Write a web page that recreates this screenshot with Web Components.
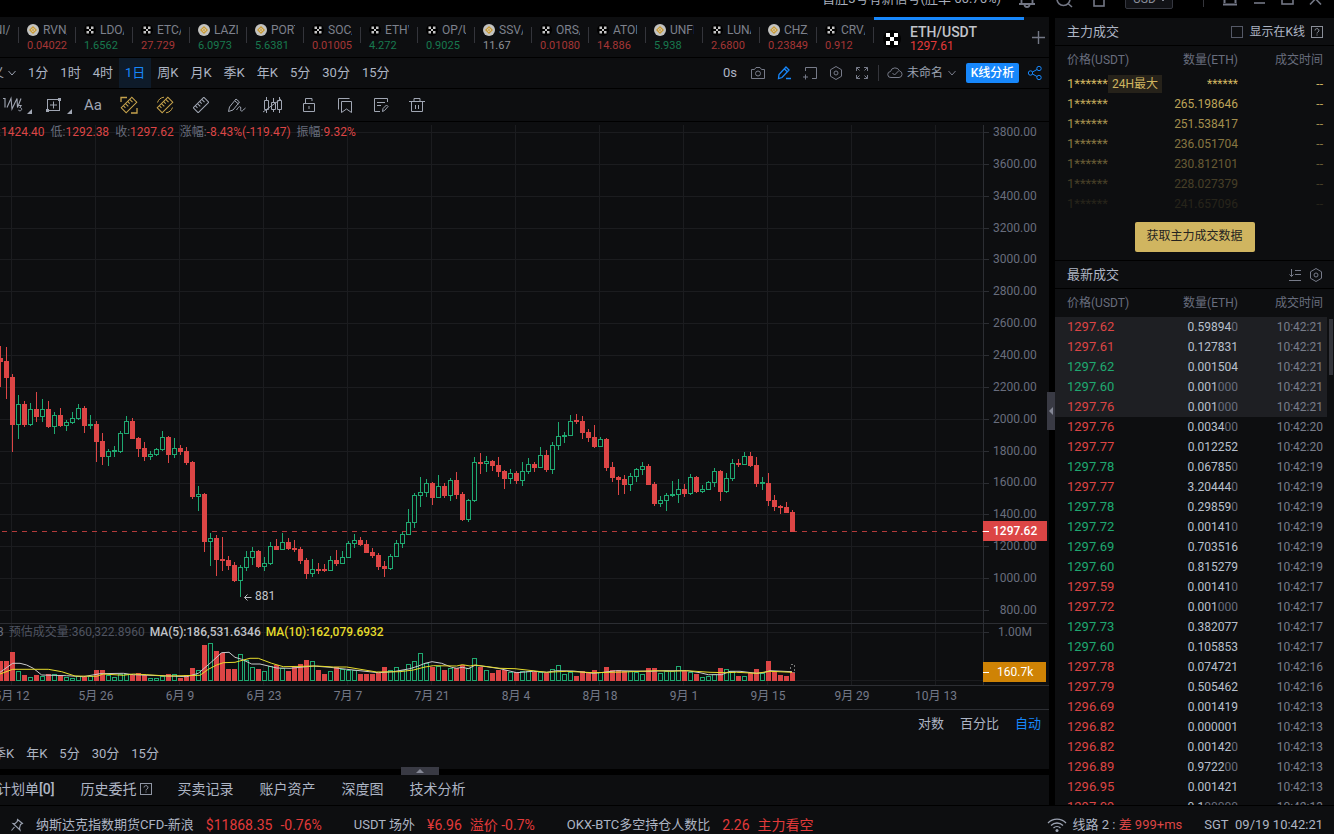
<!DOCTYPE html>
<html lang="zh-CN">
<head>
<meta charset="utf-8">
<title>ETH/USDT 1297.61</title>
<style>
:root{
  --panel:#0d0e10; --line:#2c2e33; --grid:#1b1c1f;
  --text:#adb5c4; --muted:#686d7d; --dim:#8a8e98;
  --red:#dc4545; --green:#1fa971; --blue:#1787fb; --gold:#d0b560;
}
html,body{height:100%}
body{margin:0;background:#000;color:var(--text);overflow:hidden;
  font:13px/16px Roboto,"Noto Sans CJK SC",sans-serif}
</style>
</head>
<body>
<trade-app></trade-app>
<script>
const BASE = `*{box-sizing:border-box}
button{font:inherit;color:inherit;background:none;border:0;padding:0;margin:0;white-space:nowrap}
a{color:inherit;text-decoration:none}
.red{color:var(--red)}.green{color:var(--green)}`;

function define(name, css, html){
  customElements.define(name, class extends HTMLElement{
    constructor(){
      super();
      const t = document.createElement('template');
      t.innerHTML = `<style>${BASE}${css}</style>${typeof html === 'function' ? '' : html}`;
      this.attachShadow({mode:'open'}).append(t.content.cloneNode(true));
    }
    connectedCallback(){
      if(typeof html === 'function' && !this.ready){
        this.ready = true;
        const t = document.createElement('template');
        t.innerHTML = html(this);
        this.shadowRoot.append(t.content);
      }
    }
  });
}

/* ---------- icons: [width, height, markup] ---------- */
const ruler = `<g transform="rotate(-45 8 8)"><rect x="0.5" y="4.5" width="15" height="7"/><path d="M3.5 4.5v3M6.5 4.5v4M9.5 4.5v3M12.5 4.5v4"/></g>`;
const ICONS = {
  bell:[18,18,'<path d="M1 14h16M3.500 14V7.500a5.500 5.500 0 0 1 11 0V14M6.500 14.500a2.500 2.500 0 0 0 5 0" stroke-width="1.800"/>'],
  search:[17,17,'<circle cx="7.500" cy="8" r="6.500" stroke-width="1.600"/><path d="M12 12.500l4 3.500" stroke-width="1.600"/>'],
  phone:[12,16,'<rect x="1" y="1" width="10" height="14" stroke-width="1.600"/>'],
  panel:[16,16,'<path d="M2.500 12V2h11v10M1 13.500h14" stroke-width="2"/>'],
  min:[13,13,'<path d="M1 10h11" stroke-width="1.600"/>'],
  max:[13,13,'<rect x="1" y="1" width="11" height="10" stroke-width="1.600"/>'],
  close:[13,13,'<path d="M1 0l11 11.500M12 0L1 11.500" stroke-width="1.600"/>'],
  down:[10,10,'<path d="M1.500 3l3.500 4 3.500-4"/>'],
  plus:[13,13,'<path d="M6.500 0v13M0 6.500h13" stroke-width="1.400"/>'],
  bnb:[12,12,'<circle cx="6" cy="6" r="6" fill="#c3c3c0" stroke="none"/><path d="M6 2l4 4-4 4-4-4z" fill="#c99a35" stroke="none"/><path d="M6 4.300L7.700 6 6 7.700 4.300 6z" fill="none" stroke="#d8d4c4" stroke-width="1"/>'],
  okx:[12,12,'<circle cx="6" cy="6" r="6" fill="#000" stroke="none"/><path d="M2.500 2.500H5V5H2.500zM7 2.500h2.500V5H7zM5 5h2v2H5zM2.500 7H5v2.500H2.500zM7 7h2.500v2.500H7z" fill="#c4c4c4" stroke="none"/>'],
  okxbig:[18,18,'<circle cx="9" cy="9" r="9" fill="#000" stroke="none"/><path d="M3 3h4v4H3zM11 3h4v4h-4zM7 7h4v4H7zM3 11h4v4H3zM11 11h4v4h-4z" fill="#fff" stroke="none"/>'],
  camera:[16,16,'<path d="M1.500 4.500h3l1.500-2h4l1.500 2h3v9h-13z"/><circle cx="8" cy="8.500" r="2.500"/>'],
  pen:[16,16,'<path d="M2.500 13.500l.5-4 7-7.500 3 3-7 7.500zM8.500 4l3 3M10 13.500h5" stroke-width="1.300"/>'],
  addbox:[16,16,'<path d="M3.500 6V2.500h11v11H10M3.500 9.500v5M1 12h5"/>'],
  hex:[14,16,'<path d="M7 1.500l5.500 3.250v6.500L7 14.500l-5.500-3.250v-6.500z"/><circle cx="7" cy="8" r="2"/>'],
  full:[16,16,'<path d="M2.500 6V2.500H6M2.500 2.500l3 3M10 2.500h3.500V6M13.500 2.500l-3 3M2.500 10v3.500H6M2.500 13.500l3-3M10 13.500h3.500V10M13.500 13.500l-3-3"/>'],
  cloud:[16,14,'<path d="M4 11.500a3 3 0 0 1-.5-6 4.700 4.700 0 0 1 9-.5 3.300 3.300 0 0 1-.5 6.500zM5.500 7l2 2 4-4"/>'],
  share:[16,16,'<circle cx="3.500" cy="8" r="2.200"/><circle cx="12" cy="3.500" r="2.200"/><circle cx="12" cy="12.500" r="2.200"/><path d="M5.500 7L10 4.500M5.500 9l4.500 2.500"/>'],
  waves:[39,34,'<path d="M3 10.500h2v9M7 19.500l4-9 1 10.500 5-10.500 .5 9 3.500-9" stroke-width="1.100"/><path d="M18.500 17.500h3l-1.700 2c2.500 0 2.500 3.300 0 3.300q-1 0-1.500-.8"/><path d="M32 21v5h-5z" fill="currentColor" stroke="none"/>'],
  frame:[36,34,'<rect x="8.500" y="11.500" width="12" height="11"/><path d="M14.500 13.500v7M11 17h7"/><path d="M7 21h3v3H7zM19 10h3v3h-3z" fill="currentColor" stroke="none"/><path d="M33 21v5h-5z" fill="currentColor" stroke="none"/>'],
  ruler:[16,16,ruler],
  rulerbox:[18,18,'<g transform="translate(1 1)">'+ruler+'</g><path d="M1 6V1.500h6M11 17h6v-5" stroke-width="1.300"/>'],
  rulercirc:[18,18,'<g transform="translate(1 1)">'+ruler+'</g><path d="M1.500 6.500A8 8 0 0 1 8 1.200M16.500 11.500A8 8 0 0 1 10 16.800"/>'],
  brush:[20,16,'<path d="M1.500 14.500l1-4.500 6.500-8 3.500 3-6.500 8zM8 4l3.500 3M9.500 13c2-3 3-4 4-3s-1 4 1 4 2-2 4-3"/>'],
  candles:[20,16,'<path d="M3.500 0v3M3.500 13v3M10.500 1v4M10.500 12v3M16.500 0v3M16.500 13v3"/><path d="M1.500 3.500h4v9h-4zM8.500 5.500h4v7h-4zM14.500 3.500h4v9h-4zM0 15L18 2"/>'],
  lock:[14,16,'<path d="M1.500 6.500h11v8h-11zM3.500 6V1.500H10V4M7 9v3"/>'],
  save:[16,16,'<path d="M1.500 12.500v-11h11M4.500 4.500h10v11l-5-3.500-5 3.500z"/>'],
  note:[16,16,'<path d="M14.500 5V1.500h-13v13H7M4 5.500h8M4 8.500h4M9.500 14.500l.5-3 3.500-3.500 1.500 1.500-3.500 4z"/>'],
  trash:[16,16,'<path d="M0 4.500h16M5 4V1.500h6V4M2.500 4.500v10h11v-10M6.500 8v4M9.500 8v4"/>'],
  help:[12,12,'<rect x="0.500" y="0.500" width="11" height="11"/><path d="M4 4.500a2 1.800 0 1 1 3 1.500q-1 .5-1 1.500M6 8.500v1"/>'],
  sort:[14,14,'<path d="M3.500 1v7.500M1.500 6.500l2 2 2-2M7 2.500h6M7 6.500h6M1 12.500h12"/>'],
  pin:[14,14,'<path d="M7.500 1.500l5 4-2 1-1 3.500.5 2-7-6.500 2 .2L7.300 3.500zM4.500 9L1.500 12.500" stroke-width="1.100"/>'],
  wifi:[20,16,'<path d="M1 6a12.500 12.500 0 0 1 18 0M4 8.500a8.500 8.500 0 0 1 12 0M6.500 11a5 5 0 0 1 7 0" stroke-width="1.300"/><circle cx="10" cy="13.500" r="1.500" fill="currentColor" stroke="none"/>']
};
define('ui-icon', ':host{display:inline-flex;flex:none}svg{display:block}', el => {
  const [w,h,m] = ICONS[el.getAttribute('name')];
  return `<svg width="${w}" height="${h}" viewBox="0 0 ${w} ${h}" fill="none" stroke="currentColor" aria-hidden="true">${m}</svg>`;
});

/* ---------- window title bar ---------- */
define('title-bar', `
:host{display:flex;align-items:flex-end;height:17px;overflow:hidden}
.bar{flex:1;display:flex;align-items:center;justify-content:flex-end;height:36px;padding-right:12px;color:#737785}
.msg{color:#a9b0be;margin-right:17px}
.tools,.win{display:flex;align-items:center}
.tools{gap:20px}
select{appearance:none;font:12px/16px Roboto,sans-serif;color:#8a8e9a;background:#111216;border:1px solid #34363f;border-radius:2px;
 width:48px;height:20px;padding:0 7px;margin:0}
.usd{position:relative;margin:0 30px 0 20px;display:flex;color:#8a8e9a}
.usd ui-icon{position:absolute;right:5px;top:5px}
.win{gap:15px}
.sep{width:1px;height:16px;background:#34353b;margin-right:18px}
`, `<div class="bar"><a class="msg" href="#">首胜3号有新信号(胜率 66.76%)</a>
<div class="tools"><ui-icon name="bell"></ui-icon><ui-icon name="search"></ui-icon><ui-icon name="phone"></ui-icon></div>
<label class="usd"><select aria-label="计价货币"><option>USD</option></select><ui-icon name="down"></ui-icon></label><span class="sep"></span>
<div class="win"><ui-icon name="panel"></ui-icon><ui-icon name="min"></ui-icon><ui-icon name="max"></ui-icon><ui-icon name="close"></ui-icon></div></div>`);

/* ---------- pair tabs ---------- */
define('pair-tab', `
:host{display:block;flex:none;width:57px;border-left:1px solid transparent;padding:5px 0 0 8px;position:relative;font-size:12px}
:host::before{content:"";position:absolute;left:-1px;top:10px;height:16px;border-left:1px solid #34353b}
.n{display:flex;align-items:center;gap:4px;color:#7d818c;height:16px}
.n span{width:24px;overflow:hidden;white-space:nowrap}
.p{font-size:11px;line-height:16px}
.red{color:#a63636}.green{color:#18794f}.flat{color:#8f9298}
`, el => `<div class="n"><ui-icon name="${el.getAttribute('icon')}"></ui-icon><span>${el.getAttribute('pair')}</span></div><div class="p ${el.getAttribute('tone')}"><slot></slot></div>`);

const TABS = [['okx','UNI/','','red'],['bnb','RVN/','0.04022','red'],['okx','LDO/','1.6562','green'],['okx','ETC/','27.729','red'],
['bnb','LAZI','6.0973','green'],['bnb','PORT','5.6381','green'],['okx','SOC/','0.01005','red'],['okx','ETHW','4.272','green'],
['okx','OP/U','0.9025','green'],['bnb','SSV/','11.67','flat'],['okx','ORS/','0.01080','red'],['okx','ATOM','14.886','red'],
['bnb','UNFI','5.938','green'],['okx','LUNA','2.6800','red'],['bnb','CHZ/','0.23849','red'],['okx','CRV/','0.912','red']];
define('pair-tabs', `
:host{display:flex;height:40px;background:var(--panel);overflow:hidden}
.list{display:flex;margin-left:-39px}
.active{display:flex;align-items:center;gap:9px;width:151px;padding:3px 0 0 10px;position:relative}
.active::before{content:"";position:absolute;left:1px;right:0;top:0;height:3px;background:var(--blue)}
.active::after{content:"";position:absolute;left:0;top:10px;height:16px;border-left:1px solid #34353b}
.active div{line-height:14px}
b{display:block;font-size:14px;font-weight:500;color:#c0c3ca}
.v{font-size:12px;color:#e23a3a}
.add{margin:0 4px 0 auto;color:#737785;display:flex;align-items:center}
`, `<div class="list">${TABS.map(t=>`<pair-tab icon="${t[0]}" pair="${t[1]}" tone="${t[3]}">${t[2]}</pair-tab>`).join('')}</div>
<div class="active"><ui-icon name="okxbig"></ui-icon><div><b>ETH/USDT</b><span class="v">1297.61</span></div></div>
<button class="add" aria-label="添加"><ui-icon name="plus"></ui-icon></button>`);

/* ---------- period row ---------- */
const btns = a => a.map(x=>`<button${x==='1日'?' class="on"':''}>${x}</button>`).join('');
define('period-bar', `
:host{display:flex;align-items:stretch;height:30px;background:var(--panel);overflow:hidden}
nav{display:flex;margin-left:-35px}
nav button{padding:0 6px;display:flex;align-items:center}
nav .more{padding:0 5px 0 0;gap:3px;color:#9aa1b0}
nav .on{color:var(--blue);background:#0e1b2a}
.side{display:flex;align-items:center;margin-left:auto;padding-right:6px;color:#777b89}
.delay{color:var(--text);margin-right:13px}
.ic{display:flex;gap:10px;align-items:center;padding-right:8px;border-right:1px solid #34353b}
.ic>*{width:16px;justify-content:center}
.ic .pen{color:var(--blue)}
.name{display:flex;align-items:center;font-size:12px;gap:4px;margin:0 9px 0 8px}
.name span{color:#9ba2b1}
.go{background:var(--blue);color:#fff;height:20px;width:53px;border-radius:2px;font-size:12px;font-weight:500;margin-right:8px}
.share{color:var(--blue)}
`, `<nav><button class="more">自定义<ui-icon name="down"></ui-icon></button>${btns(['1分','1时','4时','1日','周K','月K','季K','年K','5分','30分','15分'])}</nav>
<div class="side"><span class="delay">0s</span><div class="ic"><ui-icon name="camera"></ui-icon><ui-icon class="pen" name="pen"></ui-icon><ui-icon name="addbox"></ui-icon><ui-icon name="hex"></ui-icon><ui-icon name="full"></ui-icon></div>
<button class="name"><ui-icon name="cloud"></ui-icon><span>未命名</span><ui-icon name="down"></ui-icon></button><button class="go">K线分析</button><ui-icon class="share" name="share"></ui-icon></div>`);

/* ---------- drawing tools ---------- */
define('draw-bar', `
:host{display:flex;height:32px;background:var(--panel);color:#a0a6b3;overflow:hidden}
button{flex:none;width:36px;display:flex;align-items:center;justify-content:center}
.wide{width:39px}
.aa{font-size:15px}
.y{color:#c6a34c}
`, `<button class="wide" aria-label="波浪"><ui-icon name="waves"></ui-icon></button><button aria-label="形状"><ui-icon name="frame"></ui-icon></button><button class="aa">Aa</button>
<button class="y" aria-label="区间统计"><ui-icon name="rulerbox"></ui-icon></button><button class="y" aria-label="测距"><ui-icon name="rulercirc"></ui-icon></button>`
+ ['ruler','brush','candles','lock','save','note','trash'].map(n=>`<button aria-label="${n}"><ui-icon name="${n}"></ui-icon></button>`).join(''));

/* ---------- chart data: colour, high, open/close top, bottom, low (thirds of a pixel) ---------- */
const EARLY = `R48,84,96,170 R50,93,144,208 R132,141,285,366 G195,222,285,328 R212,222,285,290 G219,237,285,288 R186,237,261,276 G207,237,261,276 R213,237,291,294 G246,255,291,312 R234,255,288,290 G270,276,288,303 G246,264,279,282 G223,234,267,270 R228,234,288,308 G255,282,288,298 R274,282,336,395 R309,333,381,404 G357,363,381,408 G348,360,366,381 G303,309,366,369 G258,273,312,312 R265,273,327,327 R321,324,357,381 R336,354,381,392 G363,372,381,390 G354,357,375,378 G303,321,360,363 R318,321,375,398 G324,354,375,384 R345,354,366,375 R352,363,399,405 R393,396,501,506 G468,492,501,543 R489,492,636,666 G608,624,636,708 R615,624,690,738 R621,687,693,723 R679,690,708,720 R696,705,753,756 G705,711,753,801 G663,681,714,724 G651,663,684,705 R659,663,711,714 G681,699,711,723 G636,648,702,705 R627,648,660,660 G609,636,660,660 R624,636,657,660 R630,654,660,666 R651,657,693,701 R684,690,732,746 G687,717,732,742 R699,717,723,731 R702,717,723,725`;
const LATE = `G498,510,543,543 R480,510,522,528 G483,501,522,522 G453,459,504,504 G432,450,462,474 R441,450,465,468 R450,462,489,490 R474,486,498,504 R489,495,531,540 R513,528,537,561 G492,498,537,540 G450,459,501,501 G425,432,462,474 G357,396,435,435 G309,315,399,414 G261,306,318,351 G267,279,309,321 R276,279,324,345 G255,288,324,324 R279,288,318,324 G264,270,318,332 R246,270,315,327 R306,312,390,392 G327,330,390,396 G201,216,333,336 R189,216,222,251 G198,213,222,246 R210,213,228,243 R201,225,246,261 R240,243,267,297 G237,249,267,282 R243,249,273,281 G216,243,273,288 G204,222,246,251 R216,222,234,246 G171,195,234,234 R180,195,240,246 G156,165,240,251 G96,138,168,180 G126,135,141,159 G75,93,138,138 R72,90,96,102 R78,93,129,147 R117,126,144,156 R105,141,171,174 G141,147,171,171 R144,147,234,243 R216,231,264,276 R258,261,270,315 R255,267,285,312 G250,258,285,303 G234,237,261,276 G216,228,240,254 R222,228,285,285 R276,282,342,348 G318,330,342,351 G309,315,333,363 G273,312,318,321 G267,297,315,339 R282,297,312,320 G252,261,312,315 R258,261,306,309 G285,297,306,309 G273,276,300,300 G234,243,279,290 R240,243,306,333 G249,264,306,309 G207,219,267,273 R207,219,225,231 G186,198,225,225 R186,198,228,231 R201,225,282,290 G261,276,282,300 R249,279,333,348 R315,330,351,363 R345,348,354,372 R336,351,369,369 R360,366,426,426`;
const VOLUME = [153,153,126,183,195,201,195,198,192,192,195,201,204,198,200,199,180,180,195,201,192,192,194,189,195,204,204,198,192,192,204,195,174,180,105,99,123,129,177,177,132,150,171,177,183,168,165,174,183,171,162,150,153,180,192,183,171,177,180,180,192,192,192,189,171,180,171,180,162,153,129,159,171,168,180,174,174,165,174,144,171,180,189,180,180,185,186,183,183,186,186,189,177,165,192,186,198,183,186,180,186,171,180,180,183,183,186,192,174,174,189,183,183,168,183,186,192,201,198,192,174,177,183,198,198,189,177,189,153,183,195,198,186];
const MA5 = '0,187 38,160 60,160 80,165 100,175 125,195 200,197 250,200 300,191 370,190 400,194 560,200 595,190 630,160 665,128 687,127 705,142 725,148 755,162 780,162 830,174 870,175 940,168 990,172 1040,178 1135,188 1180,185 1230,176 1255,168 1275,160 1296,155 1325,160 1355,172 1370,175 1387,172 1405,176 1425,166 1460,170 1500,176 1550,188 1600,184 1640,187 1670,182 1720,183 1780,190 1800,188 1850,182 1950,184 1995,182 2060,182 2100,188 2125,194 2165,194 2190,184 2220,184 2270,190 2290,188 2310,182 2376,185';
const MA10 = '0,192 38,178 145,178 185,185 225,198 290,199 310,192 370,196 400,192 440,194 500,198 600,196 625,178 650,165 670,158 705,157 730,150 750,145 775,145 815,160 850,170 950,168 1000,171 1040,171 1130,186 1200,185 1240,180 1275,171 1300,167 1370,168 1387,164 1410,168 1425,165 1500,175 1545,176 1640,187 1700,184 1780,188 1870,186 1970,182 2010,184 2060,182 2130,187 2180,188 2210,187 2270,190 2310,184 2376,187';
const PRICES = Array.from({length:16},(_,i)=>3800-200*i);
const priceY = v => Math.round(10 + (3800-v)*478/3000);

function plotMarkup(){
  let s = '';
  for(const p of PRICES) s += `<rect class="g" x="0" y="${priceY(p)}" width="100%" height="1"/>`;
  for(const y of [510,558]) s += `<rect class="g" x="0" y="${y}" width="100%" height="1"/>`;
  for(let x=11;x<1000;x+=84) s += `<rect class="g" x="${x}" y="3" width="1" height="560"/>`;
  s += `<rect class="l" x="0" y="501" width="100%" height="1"/>`;
  s += `<line x1="2" x2="100%" y1="409.5" y2="409.5" stroke="#dc4545" stroke-dasharray="5 5" opacity=".8"/>`;
  const rows = [...EARLY.split(' ').map(r=>[r,208]), ...LATE.split(' ').map(r=>[r,268])];
  rows.forEach(([r,base],k)=>{
    const [h,t,b,l] = r.slice(1).split(',').map(n=>base+Math.round(n/3));
    const x = k*6, up = r[0]==='G', c = up?'u':'d';
    if(t>h) s += `<rect class="${c}" x="${x}" y="${h}" width="1" height="${t-h}"/>`;
    if(l>b) s += `<rect class="${c}" x="${x}" y="${b}" width="1" height="${l-b}"/>`;
    const v = 488+Math.round(VOLUME[k]/3);
    if(up){
      s += `<rect class="o" x="${x-1.5}" y="${t+.5}" width="4" height="${Math.max(b-t-1,1)}"/>`;
      s += `<rect class="o" x="${x-1.5}" y="${v+.5}" width="4" height="${558-v}"/>`;
    }else{
      s += `<rect class="d" x="${x-2}" y="${t}" width="5" height="${Math.max(b-t,1)}"/>`;
      s += `<rect class="d" x="${x-2}" y="${v}" width="5" height="${559-v}"/>`;
    }
  });
  s += `<rect x="790.5" y="542.5" width="4" height="8" fill="none" stroke="#777" stroke-dasharray="2 2"/>`;
  const line = (pts,c) => `<polyline points="${pts.split(' ').map(p=>{const [a,b]=p.split(',');return (a/3).toFixed(1)+','+(488+b/3).toFixed(1)}).join(' ')}" fill="none" stroke="${c}" stroke-width="1" shape-rendering="auto"/>`;
  s += line(MA5,'#c9cacc') + line(MA10,'#e6dc2c');
  s += `<path d="M244.500 475.500h7M247.500 472.500l-3 3 3 3" fill="none" stroke="#b9bbc0" shape-rendering="auto"/><text x="255" y="478">881</text>`;
  return `<svg width="100%" height="563" shape-rendering="crispEdges" role="img" aria-label="ETH/USDT 日K线">${s}</svg>`;
}
define('price-chart', `
:host{display:grid;grid-template-columns:minmax(0,1fr) 66px;background:var(--panel);font-size:12px}
.plot{display:grid;grid-template-rows:501px auto;overflow:hidden}
.plot svg{grid-area:1/1/3/2;display:block}
.g{fill:var(--grid)}.l{fill:var(--line)}.u{fill:var(--green)}.d{fill:var(--red)}.o{fill:var(--panel);stroke:var(--green)}
text{fill:#c4c6ca;font-size:12px}
.legend{grid-column:1;display:flex;align-self:start;white-space:nowrap;z-index:1;color:var(--muted);line-height:16px}
.ohlc{grid-row:1;gap:6px;margin-left:-14px;padding-top:2px}
.ohlc i{font-style:normal}
.vol{grid-row:2;gap:5px;margin-left:-3px;padding-top:1px}
.est{color:#4f5461}.vol b{font-weight:500}.m5{color:#c0c3c8}.m10{color:#e6dc2c}
.axis{position:relative;color:var(--muted)}
.axis svg{position:absolute;left:0;top:0}
.labels{position:absolute;left:10px;top:2px;height:494px;display:flex;flex-direction:column;justify-content:space-between;text-align:right}
.million{position:absolute;left:15px;top:502px}
.tag{position:absolute;left:0;width:64px;height:20px;line-height:20px;color:#fff;font-weight:500;padding-left:10px}
.tag::before{content:"";position:absolute;left:0;top:10px;width:6px;height:1px;background:#fff}
.last{top:399px;background:#dc4545}
.amount{top:540px;width:63px;background:#cf8305;padding-left:14px;font-weight:400}
.dates{grid-column:1/3;display:flex;height:25px;border-top:1px solid var(--line);border-bottom:1px solid var(--line);overflow:hidden;color:#747988}
.dates span{flex:none;width:84px;text-align:center;line-height:20px}
.dates span:first-child{margin-left:-30px}
`, () => `<div class="plot">${plotMarkup()}
<div class="legend ohlc"><span>高:<i class="red">1424.40</i></span><span>低:<i class="red">1292.38</i></span><span>收:<i class="red">1297.62</i></span><span>涨幅:<i class="red">-8.43%(-119.47)</i></span><span>振幅:<i class="red">9.32%</i></span></div>
<div class="legend vol"><span>3</span><span class="est">预估成交量:360,322.8960</span><b class="m5">MA(5):186,531.6346</b><b class="m10">MA(10):162,079.6932</b></div></div>
<div class="axis"><svg width="66" height="563" shape-rendering="crispEdges"><rect class="l" x="0" y="3" width="1" height="560"/><rect class="l" x="0" y="501" width="64" height="1"/>${[...PRICES.map(priceY),510].map(y=>`<rect class="l" x="0" y="${y}" width="6" height="1"/>`).join('')}</svg>
<div class="labels">${PRICES.map(p=>`<span>${p}.00</span>`).join('')}</div><span class="million">1.00M</span><span class="tag last">1297.62</span><span class="tag amount">160.7k</span></div>
<div class="dates">${['5月 12','5月 26','6月 9','6月 23','7月 7','7月 21','8月 4','8月 18','9月 1','9月 15','9月 29','10月 13'].map(d=>`<span>${d}</span>`).join('')}</div>`);

/* ---------- below the chart ---------- */
define('scale-bar', `
:host{display:block;background:var(--panel);flex:1}
.scale{display:flex;justify-content:flex-end;gap:16px;height:28px;align-items:center;padding-right:8px}
.on{color:var(--blue)}
nav{display:flex;height:31px;margin-left:-13px}
nav button{padding:0 6px}
`, `<div class="scale"><button>对数</button><button>百分比</button><button class="on">自动</button></div><nav>${btns(['季K','年K','5分','30分','15分'])}</nav>`);

define('order-tabs', `
:host{display:block;position:relative;padding-top:6px}
nav{display:flex;height:30px;padding-bottom:2px;background:var(--panel);font-size:14px;overflow:hidden}
nav button{padding:0 13px;display:flex;align-items:center;gap:3px}
nav button:first-child{margin-left:-16px;gap:0}
b{font-weight:500}
ui-icon{color:#8f95a3}
.fold{position:absolute;left:401px;top:-2px;width:38px;height:8px;background:#393a44;display:flex;justify-content:center;align-items:center}
.fold::before{content:"";border:4px solid transparent;border-top:0;border-bottom-color:#858896}
`, `<button class="fold" aria-label="展开"></button><nav><button>计划单<b>[0]</b></button><button>历史委托<ui-icon name="help"></ui-icon></button><button>买卖记录</button><button>账户资产</button><button>深度图</button><button>技术分析</button></nav>`);

/* ---------- trade tables ---------- */
const TABLE = `
table{border-collapse:collapse;table-layout:fixed;width:calc(100% - 7px);font-size:12px;white-space:nowrap}
th,td{padding:0;height:20px;text-align:right;font-weight:400}
th{color:var(--muted)}
th:first-child,td:first-child{text-align:left;padding-left:12px}
th:last-child,td:last-child{padding-right:4px;width:89px}
th:nth-child(2){width:73px}
header{display:flex;align-items:center;padding:0 11px 0 12px;border-bottom:1px solid #000}
h2{font-size:13px;font-weight:400;margin:0 auto 0 0}
td:first-child{font-size:13px}`;
const HEAD = '<thead><tr><th>价格(USDT)</th><th>数量(ETH)</th><th>成交时间</th></tr></thead>';
define('main-trades', TABLE + `
:host{display:block;background:var(--panel);height:243px;margin-top:1px;border-bottom:1px solid #000}
header{height:28px;gap:6px;font-size:12px}
label{display:flex;align-items:center;gap:6px}
input{appearance:none;width:12px;height:12px;margin:0;border:1px solid #555967}
header ui-icon{color:var(--dim)}
th{height:28px}
td{color:var(--gold)}
em{font-style:normal;font-size:12px;line-height:18px;display:inline-block;background:#26221a;padding:0 4px}
td:first-child{line-height:18px}
.get{display:block;margin:8px auto 0;width:120px;height:30px;border-radius:2px;background:var(--gold);color:#24231f;font-size:12px;padding-bottom:2px}
`, `<header><h2>主力成交</h2><label><input type="checkbox">显示在K线</label><ui-icon name="help"></ui-icon></header>
<table>${HEAD}<tbody>${[['******',100],['265.198646',90],['251.538417',77],['236.051704',62],['230.812101',46],['228.027379',29],['241.657096',13]].map(([q,o],i)=>`<tr style="opacity:${o/100}"><td>1******${i?'':'<em>24H最大</em>'}</td><td>${q}</td><td>--</td></tr>`).join('')}</tbody></table>
<button class="get">获取主力成交数据</button>`);

const LAST = `R1297.62 0.59894|0 21,R1297.61 0.127831| 21,G1297.62 0.001504| 21,G1297.60 0.001|000 21,R1297.76 0.001|000 21,R1297.76 0.0034|00 20,R1297.77 0.012252| 20,G1297.78 0.06785|0 19,R1297.77 3.20444|0 19,G1297.78 0.29859|0 19,G1297.72 0.00141|0 19,G1297.69 0.703516| 19,G1297.60 0.815279| 19,R1297.59 0.00141|0 17,R1297.72 0.001|000 17,G1297.73 0.382077| 17,G1297.60 0.105853| 17,R1297.78 0.074721| 16,R1297.79 0.505462| 16,R1296.69 0.001419| 13,R1296.82 0.000001| 13,R1296.82 0.00142|0 13,R1296.89 0.9722|00 13,R1296.95 0.001421| 13,R1297.09 0.1|00000 13`.split(',');
define('last-trades', TABLE + `
:host{display:block;background:var(--panel);flex:1;min-height:0;overflow:hidden;position:relative}
header{height:28px;gap:7px;padding-right:11px;color:#777b89}
h2{color:var(--text)}
th{height:28px}
.hot{background:#1e1f23}
td:nth-child(2){color:#b9c0cd}
td i{font-style:normal;color:var(--muted)}
td:last-child{color:#787d8a}
.bar{position:absolute;right:1px;top:58px;width:4px;height:56px;background:#34353b}
`, `<header><h2>最新成交</h2><ui-icon name="sort"></ui-icon><ui-icon name="hex"></ui-icon></header>
<table>${HEAD}<tbody>${LAST.map((r,i)=>{const [p,q,t]=r.split(' ');const [a,b]=q.split('|');return `<tr${i<5?' class="hot"':''}><td class="${p[0]==='R'?'red':'green'}">${p.slice(1)}</td><td>${a}${b?`<i>${b}</i>`:''}</td><td>10:42:${t}</td></tr>`}).join('')}</tbody></table><div class="bar"></div>`);

/* ---------- status bar ---------- */
define('status-bar', `
:host{display:block;height:28px;margin-top:1px;background:var(--panel)}
.row{display:flex;align-items:center;height:37px;white-space:nowrap;padding:0 11px 0 10px}
a,.net{display:flex;align-items:center;gap:12px}
a{margin-right:32px}
.big{font-size:14px;color:#e23a3a}
.pair{display:flex;gap:8px}
ui-icon{color:#9aa1b0}
.net{gap:5px;margin:0 22px 0 auto}
`, `<div class="row"><a href="#"><ui-icon name="pin"></ui-icon><span>纳斯达克指数期货CFD-新浪</span><span class="big pair"><span>$11868.35</span><span>-0.76%</span></span></a>
<a href="#"><span>USDT 场外</span><span class="big pair"><span>¥6.96</span><span>溢价 -0.7%</span></span></a>
<a href="#"><span>OKX-BTC多空持仓人数比</span><span class="big pair"><span>2.26</span><span>主力看空</span></span></a>
<span class="net"><ui-icon name="wifi"></ui-icon><span>线路 2 : <span class="red">差 999+ms</span></span></span><time>SGT&nbsp; 09/19 10:42:21</time></div>`);

/* ---------- page ---------- */
define('trade-app', `
:host{display:flex;flex-direction:column;height:100vh;min-width:0}
main{display:grid;grid-template-columns:minmax(0,1fr) 279px;column-gap:6px;flex:1;min-height:0;position:relative}
.left,.right{display:flex;flex-direction:column;min-height:0}
.stack{display:flex;flex-direction:column;gap:1px;flex:1}
.lower{display:flex;flex-direction:column;flex:1}
.fold{position:absolute;right:279px;top:375px;width:8px;height:38px;background:#393a44;display:flex;align-items:center;justify-content:flex-end;padding-right:2px}
.fold::before{content:"";border:4px solid transparent;border-left:0;border-right-color:#858896}
`, `<title-bar></title-bar>
<main><section class="left"><div class="stack"><pair-tabs></pair-tabs><period-bar></period-bar><draw-bar></draw-bar><div class="lower"><price-chart></price-chart><scale-bar></scale-bar></div></div><order-tabs></order-tabs></section>
<aside class="right"><main-trades></main-trades><last-trades></last-trades></aside><button class="fold" aria-label="收起"></button></main>
<status-bar></status-bar>`);
</script>
</body>
</html>
